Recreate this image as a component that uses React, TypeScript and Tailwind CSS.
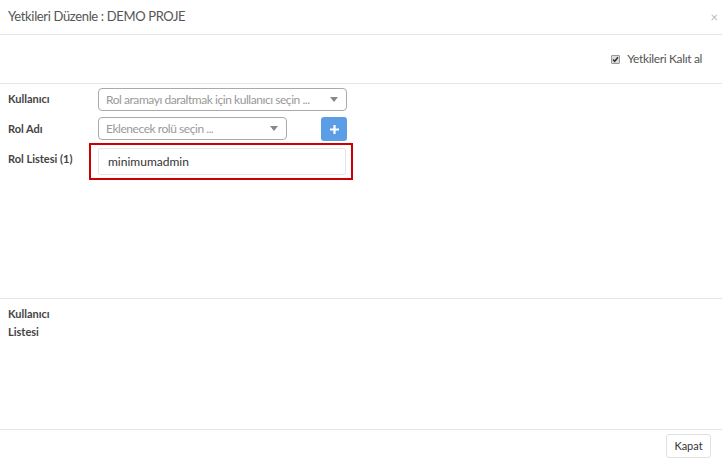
import React from 'react';

function Caret() {
    return (
        <svg width="8" height="5" viewBox="0 0 8 5" className="shrink-0">
            <path d="M0 0h8L4 5z" fill="#888" />
        </svg>
    );
}

function SelectBox({ placeholder, width }: { placeholder: string; width: string }) {
    return (
        <div className={`${width} h-[23px] flex items-center justify-between border border-[#aaa] rounded-[4px] pl-[7px] pr-[8px] bg-white`}>
            <span className="text-[#999] text-[12px] tracking-[-0.45px] whitespace-nowrap overflow-hidden">{placeholder}</span>
            <Caret />
        </div>
    );
}

export default function App() {
    return (
        <div className="w-[722px] h-[470px] bg-white flex flex-col text-[#333]" style={{ fontFamily: 'Lato, "Open Sans", sans-serif' }}>
            {/* Header */}
            <div className="h-[35px] shrink-0 flex items-center justify-between border-b border-[#e5e5e5] pl-[8px] pr-[4px]">
                <h4 className="text-[13px] text-[#555] tracking-[-0.35px]">Yetkileri Düzenle : DEMO PROJE</h4>
                <span className="text-[#bbb] text-[13px] leading-none">×</span>
            </div>

            {/* Inherit checkbox */}
            <div className="h-[49px] shrink-0 flex items-center justify-end border-b border-[#e5e5e5] pr-[20px]">
                <label className="flex items-center gap-[7px] text-[12px] text-[#555] tracking-[-0.35px]">
                    <span className="w-[9px] h-[9px] border border-[#999] bg-[#ddd] rounded-[1px] flex items-center justify-center">
                        <svg width="7" height="7" viewBox="0 0 7 7">
                            <path d="M1 3.5l1.7 1.8L6 1.2" stroke="#333" strokeWidth="1.5" fill="none" />
                        </svg>
                    </span>
                    Yetkileri Kalıt al
                </label>
            </div>

            {/* Form */}
            <div className="h-[215px] shrink-0 border-b border-[#e5e5e5] pt-[4px] pl-[8px] flex flex-col gap-[6px]">
                <div className="flex items-start">
                    <div className="w-[90px] text-[11px] font-bold text-[#444] pt-[3px]">Kullanıcı</div>
                    <SelectBox width="w-[249px]" placeholder="Rol aramayı daraltmak için kullanıcı seçin ..." />
                </div>
                <div className="flex items-start">
                    <div className="w-[90px] text-[11px] font-bold text-[#444] pt-[4px]">Rol Adı</div>
                    <SelectBox width="w-[189px]" placeholder="Eklenecek rolü seçin ..." />
                    <button className="ml-[34px] w-[26px] h-[24px] rounded-[3px] bg-[#5b9ee6] flex items-center justify-center">
                        <svg width="9" height="9" viewBox="0 0 9 9">
                            <path d="M4.5 0v9M0 4.5h9" stroke="#fff" strokeWidth="2.2" />
                        </svg>
                    </button>
                </div>
                <div className="flex items-start -mt-[4px]">
                    <div className="w-[81px] text-[11px] font-bold text-[#444] pt-[8px]">Rol Listesi (1)</div>
                    <div className="w-[264px] h-[37px] border-2 border-[#c00] pl-[7px] pr-[5px] pt-[3px]">
                        <div className="h-[27px] border border-[#e6e6e6] rounded-[2px] flex items-center pl-[9px] text-[12px] text-[#333]">
                            minimumadmin
                        </div>
                    </div>
                </div>
            </div>

            {/* User list */}
            <div className="flex-1 border-b border-[#e5e5e5] pl-[8px] pt-[6px]">
                <div className="w-[60px] text-[11px] font-bold text-[#444] leading-[18px]">Kullanıcı<br />Listesi</div>
            </div>

            {/* Footer */}
            <div className="h-[40px] shrink-0 flex items-start justify-end pr-[11px] pt-[4px]">
                <button className="h-[24px] w-[45px] border border-[#e0e0e0] rounded-[3px] text-[11px] text-[#333] bg-white">Kapat</button>
            </div>
        </div>
    );
}
